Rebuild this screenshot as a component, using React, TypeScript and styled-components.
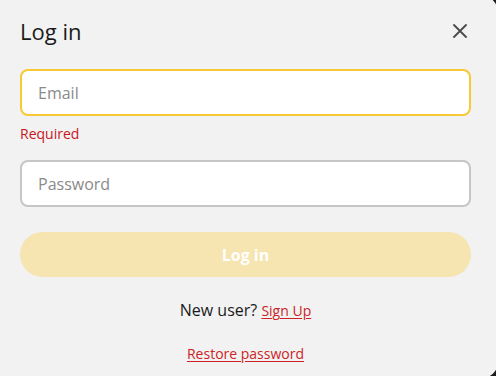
import React from 'react'
import styled, { createGlobalStyle } from 'styled-components'

const GlobalStyle = createGlobalStyle`
	html, body {
		margin: 0;
		padding: 0;
		background: #1c1c1c;
		overflow: hidden;
	}
	body {
		font-family: 'Open Sans', 'Noto Sans', sans-serif;
	}
`

const Screen = styled.div`
	width: 496px;
	height: 376px;
	overflow: hidden;
`

const Dialog = styled.form`
	box-sizing: border-box;
	width: 506px;
	height: 382px;
	margin: -4px 0 0 -8px;
	padding: 20px 27px 0 28px;
	background: #f2f2f2;
	border-radius: 16px;
	display: flex;
	flex-direction: column;
`

const Header = styled.div`
	display: flex;
	align-items: center;
	justify-content: space-between;
	height: 30px;
`

const Title = styled.h2`
	margin: 0;
	font-size: 22px;
	line-height: 30px;
	font-weight: 400;
	color: #1a1a1a;
`

const CloseButton = styled.button`
	width: 22px;
	height: 22px;
	padding: 0;
	border: none;
	background: none;
	display: flex;
	align-items: center;
	justify-content: center;
	cursor: pointer;
	color: #4a4a4a;
`

const Input = styled.input<{ $focused?: boolean }>`
	box-sizing: border-box;
	width: 100%;
	height: 47px;
	padding: 0 16px;
	border-radius: 8px;
	border: 2px solid ${(p) => (p.$focused ? '#f6c935' : '#c6c6c6')};
	background: #fff;
	font-family: inherit;
	font-size: 16px;
	color: #222;
	outline: none;
	&::placeholder {
		color: #8a8a8a;
	}
`

const EmailInput = styled(Input)`
	margin-top: 23px;
`

const PasswordInput = styled(Input)`
	margin-top: 16px;
`

const ErrorText = styled.div`
	margin-top: 8px;
	font-size: 14px;
	line-height: 20px;
	color: #c8161d;
`

const SubmitButton = styled.button`
	margin-top: 25px;
	height: 45px;
	width: 100%;
	border: none;
	border-radius: 23px;
	background: #f6e4b1;
	color: #fff;
	font-family: inherit;
	font-size: 16px;
	font-weight: 700;
	cursor: default;
`

const Footer = styled.p`
	margin: 22px 0 0;
	text-align: center;
	font-size: 16px;
	line-height: 22px;
	color: #1a1a1a;
`

const RedLink = styled.a`
	font-size: 14px;
	color: #cc1f26;
	text-decoration: underline;
	text-underline-offset: 2px;
`

const Restore = styled.div`
	margin-top: 21px;
	text-align: center;
	line-height: 20px;
`

export default function App() {
	return (
		<Screen>
			<GlobalStyle />
			<Dialog onSubmit={(e) => e.preventDefault()}>
				<Header>
					<Title>Log in</Title>
					<CloseButton type="button" aria-label="Close">
						<svg width="14" height="14" viewBox="0 0 14 14" fill="none" stroke="currentColor" strokeWidth="1.8" strokeLinecap="round">
							<path d="M1 1L13 13M13 1L1 13" />
						</svg>
					</CloseButton>
				</Header>
				<EmailInput $focused autoFocus type="email" placeholder="Email" />
				<ErrorText>Required</ErrorText>
				<PasswordInput type="password" placeholder="Password" />
				<SubmitButton type="submit" disabled>
					Log in
				</SubmitButton>
				<Footer>
					New user? <RedLink href="#">Sign Up</RedLink>
				</Footer>
				<Restore>
					<RedLink href="#">Restore password</RedLink>
				</Restore>
			</Dialog>
		</Screen>
	)
}
